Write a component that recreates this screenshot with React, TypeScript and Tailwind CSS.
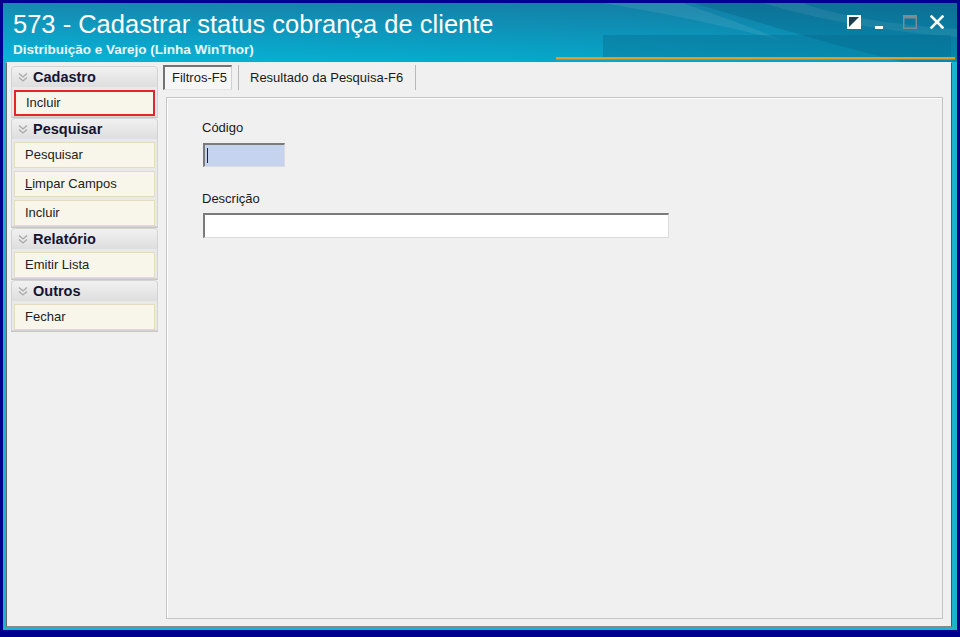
import React from "react";

const F = { fontFamily: '"Liberation Sans", Arial, sans-serif' } as const;

function Chevrons() {
  return (
    <svg width="10" height="11" viewBox="0 0 10 11" className="shrink-0">
      <path d="M1 1.5 L5 5 L9 1.5" fill="none" stroke="#a9a9a9" strokeWidth="1.3" />
      <path d="M1 5.5 L5 9 L9 5.5" fill="none" stroke="#a9a9a9" strokeWidth="1.3" />
    </svg>
  );
}

function Group({ title, items, highlight }: { title: string; items: string[]; highlight?: number }) {
  return (
    <div className="w-[147px] rounded-t-[4px] border border-[#d3d3d3] bg-[#e9e9e9] shadow-[0_1px_0_#c8c8c8] flex flex-col">
      <div className="h-[20px] flex items-center gap-[5px] pl-[6px] rounded-t-[4px] bg-gradient-to-b from-[#f1f1f1] to-[#dedede]">
        <Chevrons />
        <span className="text-[14.5px] font-bold text-[#141432] leading-none" style={F}>{title}</span>
      </div>
      <div className="flex flex-col gap-[3px] px-[2px] pt-[3px] pb-0">
        {items.map((it, i) => (
          <div
            key={i}
            className={
              i === highlight
                ? "h-[26px] flex items-center pl-[10px] bg-[#f8f6ea] border-2 border-[#e4262a] text-[13px] text-[#222]"
                : "h-[26px] flex items-center pl-[10px] bg-[#f8f6ea] border border-[#e3ddbf] text-[13px] text-[#222]"
            }
            style={F}
          >
            {it === "Limpar Campos" ? (
              <span><span className="underline">L</span>impar Campos</span>
            ) : (
              it
            )}
          </div>
        ))}
      </div>
    </div>
  );
}

export default function App() {
  return (
    <div className="w-[960px] h-[637px] bg-[#00008e] pt-[3px] pl-[3px] pr-[3px] pb-[7px] overflow-hidden">
      <div className="relative w-full h-full bg-[#1db3cc] flex flex-col pl-[3px] pr-[5px] pb-[3px]">
        {/* title bar */}
        <div className="relative -ml-[3px] -mr-[5px] h-[59px] shrink-0 overflow-hidden">
          <svg className="absolute inset-0" width="954" height="59" viewBox="0 0 954 59" preserveAspectRatio="none">
            <defs>
              <linearGradient id="tv" x1="0" y1="0" x2="0" y2="1">
                <stop offset="0" stopColor="#1788b0" />
                <stop offset="1" stopColor="#06b6d9" />
              </linearGradient>
              <linearGradient id="th" x1="0" y1="0" x2="1" y2="0">
                <stop offset="0" stopColor="#003a5a" stopOpacity="0" />
                <stop offset="0.55" stopColor="#003a5a" stopOpacity="0.1" />
                <stop offset="1" stopColor="#003a5a" stopOpacity="0.2" />
              </linearGradient>
            </defs>
            <rect x="0" y="0" width="954" height="59" fill="url(#tv)" />
            <rect x="0" y="0" width="954" height="59" fill="url(#th)" />
            <path d="M690 0 C760 20 820 40 900 59 L954 59 L954 0 Z" fill="#004f72" opacity="0.25" />
            <path d="M600 0 C660 10 720 22 780 38 C740 20 700 8 680 0 Z" fill="#ffffff" opacity="0.08" />
            <path d="M760 0 C820 18 880 28 954 34 L954 26 C890 22 830 12 800 0 Z" fill="#ffffff" opacity="0.07" />
            <rect x="600" y="32" width="348" height="22" fill="#07698e" opacity="0.38" />
            <rect x="553" y="54" width="399" height="2.5" fill="#e49b25" />
          </svg>
          <div className="relative flex flex-col pl-[10px] pt-[7px]">
            <div className="text-[25.5px] leading-[29px] text-white whitespace-nowrap" style={F}>
              573 - Cadastrar status cobrança de cliente
            </div>
            <div className="mt-[3px] text-[13.5px] leading-[16px] font-bold text-[#eaf6fa] whitespace-nowrap" style={F}>
              Distribuição e Varejo (Linha WinThor)
            </div>
          </div>
          {/* window controls */}
          <svg className="absolute left-[844px] top-[12px]" width="14" height="14" viewBox="0 0 14 14">
            <rect x="0.75" y="0.75" width="12.5" height="12.5" fill="#ffffff" stroke="#ffffff" strokeWidth="1.5" />
            <polygon points="2,2 12,2 2,12" fill="#1b3d4d" />
          </svg>
          <div className="absolute left-[872px] top-[23px] w-[8px] h-[3px] bg-white" />
          <svg className="absolute left-[900px] top-[12px]" width="14" height="14" viewBox="0 0 14 14">
            <rect x="0.75" y="0.75" width="12.5" height="12.5" fill="none" stroke="#7d8c94" strokeWidth="1.5" />
            <rect x="0" y="0" width="14" height="3.5" fill="#7d8c94" />
          </svg>
          <svg className="absolute left-[927px] top-[12px]" width="14" height="14" viewBox="0 0 14 14">
            <path d="M1.5 1.5 L12.5 12.5 M12.5 1.5 L1.5 12.5" stroke="#ffffff" strokeWidth="2.6" strokeLinecap="square" />
          </svg>
        </div>

        {/* body */}
        <div className="flex-1 min-h-0 flex bg-[#f0f0f0] border-t border-t-[#e6eef0] border-l border-r border-b border-l-[#5f6a6e] border-r-[#4f5558] border-b-[#8a8a8a]">
          {/* left panel */}
          <div className="w-[155px] shrink-0 flex flex-col gap-[1px] pl-[4px] pt-[3px]">
            <Group title="Cadastro" items={["Incluir"]} highlight={0} />
            <Group title="Pesquisar" items={["Pesquisar", "Limpar Campos", "Incluir"]} />
            <Group title="Relatório" items={["Emitir Lista"]} />
            <Group title="Outros" items={["Fechar"]} />
          </div>

          {/* right area */}
          <div className="flex-1 min-w-0 flex flex-col pt-[2px] pr-[8px] pb-[7px]">
            <div className="h-[25px] ml-[1px] flex items-stretch">
              <div className="w-[69px] flex items-center pl-[7px] bg-[#f6f6f6] border-t-2 border-l-2 border-t-[#737373] border-l-[#737373] border-r border-b border-r-[#d0d0d0] border-b-[#e6e6e6] text-[13px] text-[#1a1a1a]" style={F}>
                Filtros-F5
              </div>
              <div className="w-[6px]" />
              <div className="w-px bg-[#b8b8b8]" />
              <div className="w-[176px] flex items-center pl-[11px] text-[13px] text-[#1a1a1a]" style={F}>
                Resultado da Pesquisa-F6
              </div>
              <div className="w-px bg-[#b8b8b8]" />
            </div>
            <div className="mt-[7px] ml-[4px] flex-1 border border-[#c4c4c4] shadow-[inset_1px_1px_0_#ffffff] bg-[#f0f0f0] pl-[35px] pt-[22px] flex flex-col">
              <div className="text-[13px] leading-[16px] text-[#1a1a1a]" style={F}>Código</div>
              <div className="mt-[7px] ml-[1px] w-[82px] h-[24px] bg-[#c6d3ef] border-t-2 border-l-2 border-t-[#7b7b7b] border-l-[#7b7b7b] border-r border-b border-r-[#dcdcdc] border-b-[#dcdcdc] flex items-center pl-[2px]">
                <div className="w-px h-[15px] bg-[#222]" />
              </div>
              <div className="mt-[24px] text-[13px] leading-[16px] text-[#1a1a1a]" style={F}>Descrição</div>
              <div className="mt-[6px] ml-[1px] w-[466px] h-[25px] bg-white border-t-2 border-l-2 border-t-[#7b7b7b] border-l-[#7b7b7b] border-r border-b border-r-[#dcdcdc] border-b-[#dcdcdc]" />
            </div>
          </div>
        </div>
      </div>
    </div>
  );
}
